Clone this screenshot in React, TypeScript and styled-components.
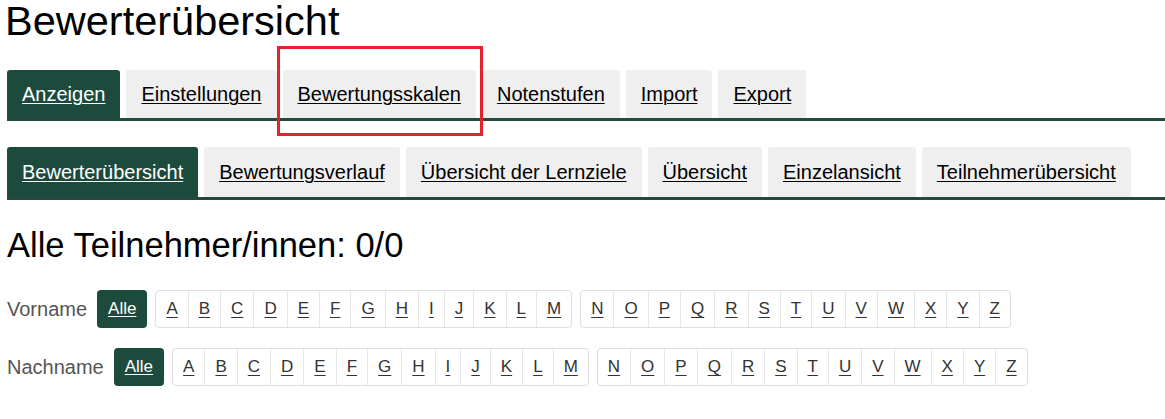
import React from "react";
import styled, { createGlobalStyle } from "styled-components";

const GlobalStyle = createGlobalStyle`
  html, body {
    margin: 0;
    padding: 0;
    background: #ffffff;
    font-family: "Liberation Sans", Arial, sans-serif;
    color: #000;
  }
`;

const GREEN = "#1c4b3d";
const LINE = "#244a40";

const Page = styled.div`
  position: relative;
  padding: 0 0 0 7px;
`;

const Title = styled.h1`
  margin: 0 0 0 -2px;
  font-size: 41.5px;
  line-height: 44px;
  margin-top: -1px;
  font-weight: normal;
  color: #000;
`;

const TabBar = styled.nav<{ $top: number }>`
  display: flex;
  gap: 6px;
  margin-top: ${(p) => p.$top}px;
  border-bottom: 3px solid ${LINE};
`;

const Tab = styled.a<{ $active?: boolean; $h: number }>`
  display: flex;
  align-items: center;
  box-sizing: border-box;
  height: ${(p) => p.$h}px;
  padding: 0 15px;
  font-size: 20px;
  line-height: 23px;
  border-radius: 3px 3px 0 0;
  background: ${(p) => (p.$active ? GREEN : "#efefef")};
  color: ${(p) => (p.$active ? "#ffffff" : "#000000")};
  text-decoration: underline;
  text-underline-offset: 2px;
  text-decoration-thickness: 1px;
  cursor: pointer;
  white-space: nowrap;
`;

const Heading = styled.h2`
  margin: 25px 0 0 0;
  font-size: 34.5px;
  line-height: 40px;
  font-weight: normal;
  color: #000;
`;

const FilterRow = styled.div<{ $top: number }>`
  display: flex;
  align-items: center;
  gap: 8px;
  margin-top: ${(p) => p.$top}px;
`;

const Label = styled.span`
  font-size: 20px;
  color: #555555;
  margin-right: 2px;
`;

const AllButton = styled.a`
  display: flex;
  align-items: center;
  box-sizing: border-box;
  height: 38px;
  padding: 0 11px;
  border-radius: 4px;
  background: ${GREEN};
  color: #ffffff;
  font-size: 17px;
  text-decoration: underline;
  text-underline-offset: 2px;
`;

const LetterGroup = styled.div`
  display: flex;
  box-sizing: border-box;
  height: 38px;
  border: 1px solid #dedede;
  border-radius: 4px;
  background: #fff;
`;

const Letter = styled.a`
  display: flex;
  align-items: center;
  padding: 0 10px;
  font-size: 17px;
  color: #333333;
  text-decoration: underline;
  text-underline-offset: 3px;
  & + & {
    border-left: 1px solid #e6e6e6;
  }
`;

const Annotation = styled.div`
  position: absolute;
  left: 277px;
  top: 47px;
  width: 206px;
  height: 90px;
  box-sizing: border-box;
  border: 3px solid #e3232b;
  pointer-events: none;
`;

const mainTabs = ["Anzeigen", "Einstellungen", "Bewertungsskalen", "Notenstufen", "Import", "Export"];
const subTabs = [
  "Bewerterübersicht",
  "Bewertungsverlauf",
  "Übersicht der Lernziele",
  "Übersicht",
  "Einzelansicht",
  "Teilnehmerübersicht",
];
const firstHalf = "ABCDEFGHIJKLM".split("");
const secondHalf = "NOPQRSTUVWXYZ".split("");

function Filter({ label, top }: { label: string; top: number }) {
  return (
    <FilterRow $top={top}>
      <Label>{label}</Label>
      <AllButton>Alle</AllButton>
      <LetterGroup>
        {firstHalf.map((l) => (
          <Letter key={l}>{l}</Letter>
        ))}
      </LetterGroup>
      <LetterGroup>
        {secondHalf.map((l) => (
          <Letter key={l}>{l}</Letter>
        ))}
      </LetterGroup>
    </FilterRow>
  );
}

export default function App() {
  return (
    <Page>
      <GlobalStyle />
      <Title>Bewerterübersicht</Title>
      <TabBar $top={27}>
        {mainTabs.map((t, i) => (
          <Tab key={t} $h={48} $active={i === 0}>
            {t}
          </Tab>
        ))}
      </TabBar>
      <TabBar $top={26}>
        {subTabs.map((t, i) => (
          <Tab key={t} $h={50} $active={i === 0}>
            {t}
          </Tab>
        ))}
      </TabBar>
      <Heading>Alle Teilnehmer/innen: 0/0</Heading>
      <Filter label="Vorname" top={25} />
      <Filter label="Nachname" top={20} />
      <Annotation />
    </Page>
  );
}
